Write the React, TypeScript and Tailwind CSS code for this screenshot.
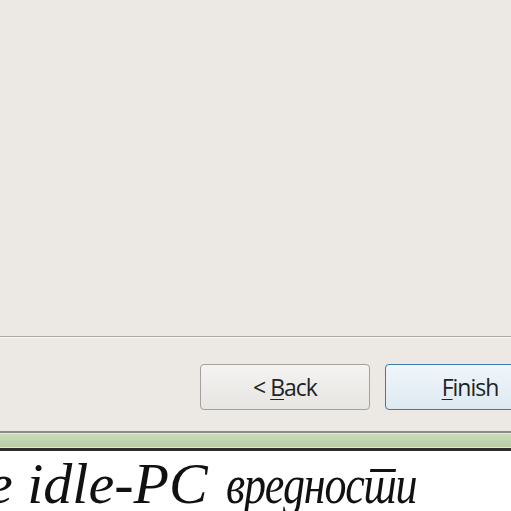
export default function App() {
  return (
    <div className="flex h-[511px] w-[511px] flex-col overflow-hidden bg-white">
      {/* dialog body */}
      <div className="h-[336px] shrink-0 bg-[#ece9e4]" />
      <div className="h-px shrink-0 bg-[#a9a7a3]" />
      <div className="h-px shrink-0 bg-[#fbfaf8]" />

      {/* button row */}
      <div className="flex h-[93px] shrink-0 gap-[15px] bg-[#ece9e4] pl-[200px] pt-[26px]">
        <button className="h-[46px] w-[170px] shrink-0 rounded-[4px] border border-[#a3a19e] bg-gradient-to-b from-[#f4f3f1] to-[#e7e5e2] font-['Open_Sans',sans-serif] text-[23px] tracking-[-1px] text-[#222]">
          &lt; <span className="underline decoration-1 underline-offset-[3px]">B</span>ack
        </button>
        <button className="h-[46px] w-[170px] shrink-0 rounded-[4px] border border-[#3d7bad] bg-gradient-to-b from-[#f0f6fa] to-[#dde9f1] font-['Open_Sans',sans-serif] text-[23px] tracking-[-1px] text-[#222]">
          <span className="underline decoration-1 underline-offset-[3px]">F</span>inish
        </button>
      </div>

      {/* window frame bottom */}
      <div className="h-[2px] shrink-0 bg-[#8c8b88]" />
      <div className="h-px shrink-0 bg-[#e4ebde]" />
      <div className="h-[13px] shrink-0 bg-gradient-to-b from-[#c9dcba] to-[#b9cfa6]" />
      <div className="h-px shrink-0 bg-[#dfe8d6]" />
      <div className="h-[3px] shrink-0 bg-[#2e2e2e]" />

      {/* caption text */}
      <div
        lang="sr"
        className="ml-[-13px] shrink-0 whitespace-nowrap pt-[3px] font-['Liberation_Serif',serif] text-[58px] italic leading-[60px] text-[#111]"
      >
        e idle-PC
        <span className="ml-[18px] inline-block origin-left scale-x-[0.8] text-[55px] tracking-[-1.5px]">вредности</span>
      </div>
    </div>
  );
}
